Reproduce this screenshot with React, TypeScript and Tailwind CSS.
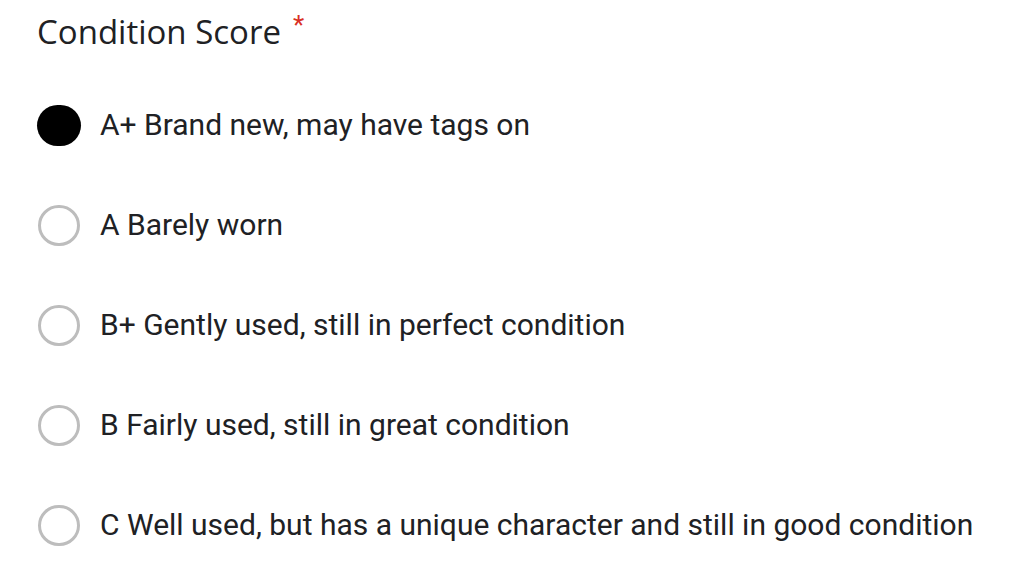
import React from "react";

const options = [
  "A+ Brand new, may have tags on",
  "A Barely worn",
  "B+ Gently used, still in perfect condition",
  "B Fairly used, still in great condition",
  "C Well used, but has a unique character and still in good condition",
];

export default function App() {
  return (
    <div className="w-[1024px] h-[563px] bg-white overflow-hidden pl-[37px]">
      <div className="h-[75px] pt-[12px] flex items-start">
        <span
          className="text-[33px] leading-[40px] text-[#202124]"
          style={{ fontFamily: '"Open Sans", sans-serif' }}
        >
          Condition Score
        </span>
        <span
          className="ml-[12px] text-[26px] leading-[26px] text-[#d93025]"
          style={{ fontFamily: '"Roboto", sans-serif' }}
        >
          *
        </span>
      </div>
      <div className="flex flex-col">
        {options.map((o, i) => (
          <div key={i} className="h-[100px] flex items-center">
            <div className="w-[45px] flex items-center justify-start">
              {i === 0 ? (
                <div className="w-[44px] h-[41px] rounded-full bg-black" />
              ) : (
                <div className="w-[42px] h-[41px] rounded-full border-[3.5px] border-[#bdbdbd] ml-[1px]" />
              )}
            </div>
            <span
              className="ml-[18px] text-[30px] leading-[40px] text-[#202124]"
              style={{ fontFamily: "Roboto, sans-serif" }}
            >
              {o}
            </span>
          </div>
        ))}
      </div>
    </div>
  );
}
